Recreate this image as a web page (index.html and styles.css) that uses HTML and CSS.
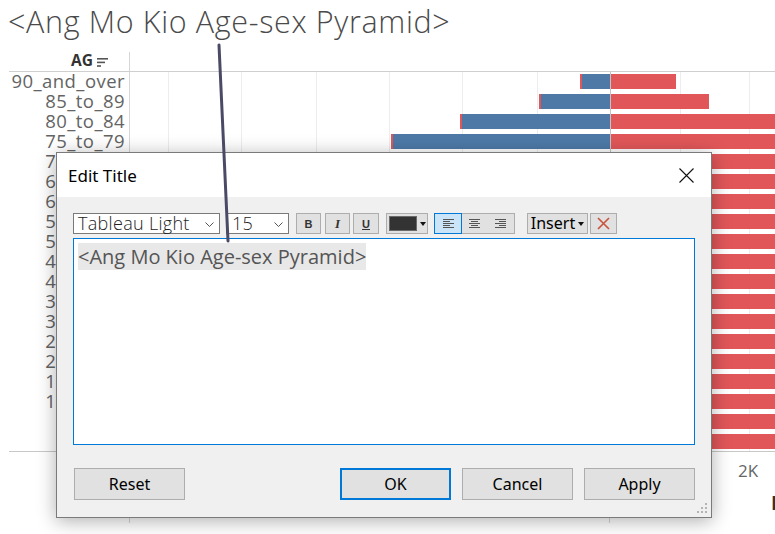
FILE: index.html
```html
<!DOCTYPE html>
<html>
<head>
<meta charset="utf-8">
<title>Edit Title</title>
<link rel="stylesheet" href="styles.css">
</head>
<body>
<div class="sheet">
  <div class="title">&lt;Ang Mo Kio Age-sex Pyramid&gt;</div>
  <div class="viz">
    <div class="rowhdr">
      <div class="rowhdr-inner">
        <span class="ag">AG</span>
        <svg class="sort" width="11" height="9" viewBox="0 0 11 9"><rect x="0" y="0" width="11" height="1.6" fill="#555"/><rect x="0" y="3.6" width="8" height="1.6" fill="#555"/><rect x="0" y="7.2" width="4" height="1.6" fill="#555"/></svg>
      </div>
    </div>
    <div class="panehdr"></div>

    <div class="labels">
      <div class="lbl">90_and_over</div>
      <div class="lbl">85_to_89</div>
      <div class="lbl">80_to_84</div>
      <div class="lbl">75_to_79</div>
      <div class="lbl">70_to_74</div>
      <div class="lbl">65_to_69</div>
      <div class="lbl">60_to_64</div>
      <div class="lbl">55_to_59</div>
      <div class="lbl">50_to_54</div>
      <div class="lbl">45_to_49</div>
      <div class="lbl">40_to_44</div>
      <div class="lbl">35_to_39</div>
      <div class="lbl">30_to_34</div>
      <div class="lbl">25_to_29</div>
      <div class="lbl">20_to_24</div>
      <div class="lbl">15_to_19</div>
      <div class="lbl">10_to_14</div>
      <div class="lbl">5_to_9</div>
      <div class="lbl">0_to_4</div>
    </div>

    <div class="pane">
      <div class="grid-line" style="left:38px"></div>
      <div class="grid-line" style="left:111px"></div>
      <div class="grid-line" style="left:186px"></div>
      <div class="grid-line" style="left:259px"></div>
      <div class="grid-line" style="left:332px"></div>
      <div class="grid-line" style="left:407px"></div>
      <div class="grid-line" style="left:550px"></div>
      <div class="grid-line" style="left:619px"></div>
      <div class="rows">
        <div class="row"><div class="lh"><div class="bar m" style="width:30px"></div></div><div class="rh"><div class="bar f" style="width:65px"></div></div></div>
        <div class="row"><div class="lh"><div class="bar m" style="width:71px"></div></div><div class="rh"><div class="bar f" style="width:98px"></div></div></div>
        <div class="row"><div class="lh"><div class="bar m" style="width:150px"></div></div><div class="rh"><div class="bar f" style="width:220px"></div></div></div>
        <div class="row"><div class="lh"><div class="bar m" style="width:219px"></div></div><div class="rh"><div class="bar f" style="width:240px"></div></div></div>
        <div class="row"><div class="lh"><div class="bar m" style="width:262px"></div></div><div class="rh"><div class="bar f" style="width:260px"></div></div></div>
        <div class="row"><div class="lh"><div class="bar m" style="width:300px"></div></div><div class="rh"><div class="bar f" style="width:280px"></div></div></div>
        <div class="row"><div class="lh"><div class="bar m" style="width:330px"></div></div><div class="rh"><div class="bar f" style="width:300px"></div></div></div>
        <div class="row"><div class="lh"><div class="bar m" style="width:350px"></div></div><div class="rh"><div class="bar f" style="width:300px"></div></div></div>
        <div class="row"><div class="lh"><div class="bar m" style="width:340px"></div></div><div class="rh"><div class="bar f" style="width:300px"></div></div></div>
        <div class="row"><div class="lh"><div class="bar m" style="width:330px"></div></div><div class="rh"><div class="bar f" style="width:300px"></div></div></div>
        <div class="row"><div class="lh"><div class="bar m" style="width:300px"></div></div><div class="rh"><div class="bar f" style="width:290px"></div></div></div>
        <div class="row"><div class="lh"><div class="bar m" style="width:290px"></div></div><div class="rh"><div class="bar f" style="width:280px"></div></div></div>
        <div class="row"><div class="lh"><div class="bar m" style="width:280px"></div></div><div class="rh"><div class="bar f" style="width:270px"></div></div></div>
        <div class="row"><div class="lh"><div class="bar m" style="width:250px"></div></div><div class="rh"><div class="bar f" style="width:260px"></div></div></div>
        <div class="row"><div class="lh"><div class="bar m" style="width:240px"></div></div><div class="rh"><div class="bar f" style="width:250px"></div></div></div>
        <div class="row"><div class="lh"><div class="bar m" style="width:230px"></div></div><div class="rh"><div class="bar f" style="width:240px"></div></div></div>
        <div class="row"><div class="lh"><div class="bar m" style="width:220px"></div></div><div class="rh"><div class="bar f" style="width:230px"></div></div></div>
        <div class="row"><div class="lh"><div class="bar m" style="width:200px"></div></div><div class="rh"><div class="bar f" style="width:220px"></div></div></div>
        <div class="row"><div class="lh"><div class="bar m" style="width:180px"></div></div><div class="rh"><div class="bar f" style="width:200px"></div></div></div>
      </div>
    </div>

    <div class="axis-left"></div>
    <div class="axis-pane">
      <div class="ax-l"></div>
      <div class="ax-r">
        <span class="tick" style="left:138px">2K</span>
        <span class="axis-title">Population</span>
      </div>
    </div>
  </div>
</div>

<div class="dialog">
  <div class="dlg-head">
    <span class="dlg-title">Edit Title</span>
    <svg class="close" width="15" height="15" viewBox="0 0 15 15"><path d="M0.5 0.5 L14.5 14.5 M14.5 0.5 L0.5 14.5" stroke="#111" stroke-width="1.1" fill="none"/></svg>
  </div>
  <div class="dlg-body">
    <div class="toolbar">
      <div class="select font-sel"><span class="sel-text">Tableau Light</span><svg class="chev" width="9" height="5" viewBox="0 0 9 5"><path d="M0.5 0.5 L4.5 4.5 L8.5 0.5" stroke="#555" stroke-width="1" fill="none"/></svg></div>
      <div class="select size-sel"><span class="sel-text">15</span><svg class="chev" width="9" height="5" viewBox="0 0 9 5"><path d="M0.5 0.5 L4.5 4.5 L8.5 0.5" stroke="#555" stroke-width="1" fill="none"/></svg></div>
      <div class="tb fmt bold">B</div>
      <div class="tb fmt ital">I</div>
      <div class="tb fmt under">U</div>
      <div class="tb color"><span class="swatch"></span><span class="caret"></span></div>
      <div class="align-group">
        <div class="seg sel"><svg width="11" height="9" viewBox="0 0 11 9"><g fill="#555"><rect x="0" y="0" width="11" height="1"/><rect x="0" y="2" width="7" height="1"/><rect x="0" y="4" width="11" height="1"/><rect x="0" y="6" width="7" height="1"/><rect x="0" y="8" width="11" height="1"/></g></svg></div>
        <div class="seg"><svg width="11" height="9" viewBox="0 0 11 9"><g fill="#555"><rect x="0" y="0" width="11" height="1"/><rect x="2" y="2" width="7" height="1"/><rect x="0" y="4" width="11" height="1"/><rect x="2" y="6" width="7" height="1"/><rect x="0" y="8" width="11" height="1"/></g></svg></div>
        <div class="seg"><svg width="11" height="9" viewBox="0 0 11 9"><g fill="#555"><rect x="0" y="0" width="11" height="1"/><rect x="4" y="2" width="7" height="1"/><rect x="0" y="4" width="11" height="1"/><rect x="4" y="6" width="7" height="1"/><rect x="0" y="8" width="11" height="1"/></g></svg></div>
      </div>
      <div class="tb insert"><span>Insert</span><span class="caret"></span></div>
      <div class="tb clear"><svg width="13" height="13" viewBox="0 0 13 13"><path d="M1 1 L12 12 M12 1 L1 12" stroke="#c9553f" stroke-width="1.7" fill="none"/></svg></div>
    </div>
    <div class="editor"><span class="hl">&lt;Ang Mo Kio Age-sex Pyramid&gt;</span></div>
    <div class="actions">
      <div class="btn reset">Reset</div>
      <div class="btn ok">OK</div>
      <div class="btn">Cancel</div>
      <div class="btn">Apply</div>
    </div>
  </div>
  <svg class="grip" width="11" height="11" viewBox="0 0 11 11"><g fill="#b4b4b4"><rect x="8" y="0" width="2" height="2"/><rect x="4" y="4" width="2" height="2"/><rect x="8" y="4" width="2" height="2"/><rect x="0" y="8" width="2" height="2"/><rect x="4" y="8" width="2" height="2"/><rect x="8" y="8" width="2" height="2"/></g></svg>
</div>

<svg class="annot" width="775" height="534" viewBox="0 0 775 534"><line x1="219" y1="45" x2="228" y2="241" stroke="#4a4a66" stroke-width="3" stroke-linecap="round"/></svg>
</body>
</html>
```

FILE: styles.css
```css
* { box-sizing: border-box; }
html, body { margin: 0; padding: 0; }
body {
  width: 775px;
  height: 534px;
  overflow: hidden;
  background: #fff;
  position: relative;
  font-family: "Open Sans", sans-serif;
}

.sheet { width: 775px; }

.title {
  height: 50px;
  padding: 1px 0 0 8px;
  font-size: 30.5px;
  font-weight: 300;
  letter-spacing: 0.65px;
  line-height: 41px;
  color: #4a4a4a;
  white-space: nowrap;
}

.viz {
  margin-left: 9px;
  display: grid;
  grid-template-columns: 121px 645px;
  grid-template-rows: 22px 380px 71px;
}

.rowhdr {
  border-bottom: 1px solid #cfcfcf;
  padding-top: 2px;
}
.rowhdr-inner {
  height: 19px;
  border-right: 1px solid #d6d6d6;
  display: flex;
  justify-content: flex-end;
  align-items: center;
  gap: 4px;
  padding: 0 21px 2px 0;
}
.ag {
  font-weight: 700;
  font-size: 15.5px;
  line-height: 17px;
  color: #333;
}
.sort { margin-top: 3px; }
.panehdr { border-bottom: 1px solid #cfcfcf; }

.labels {
  border-right: 1px solid #d6d6d6;
  border-bottom: 1px solid #c8c8c8;
  overflow: hidden;
}
.lbl {
  height: 20px;
  line-height: 20px;
  text-align: right;
  padding-right: 4px;
  font-size: 18.5px;
  letter-spacing: 0.45px;
  color: #646464;
  white-space: nowrap;
  position: relative;
  top: -1px;
}

.pane {
  position: relative;
  border-bottom: 1px solid #c8c8c8;
  overflow: hidden;
}
.grid-line {
  position: absolute;
  top: 0;
  bottom: 0;
  width: 1px;
  background: #ededed;
}
.rows { position: relative; }
.row { display: flex; height: 20px; }
.lh {
  width: 480px;
  flex: none;
  display: flex;
  justify-content: flex-end;
}
.rh {
  flex: 1;
  border-left: 1px solid #c4c4c4;
}
.bar { height: 15px; margin-top: 2px; }
.bar.m { background: #4e79a7; border-left: 2px solid #e15759; }
.bar.f { background: #e15759; }

.axis-left { border-right: 1px solid #d6d6d6; }
.axis-pane { display: flex; }
.ax-l { width: 480px; flex: none; border-right: 1px solid #d6d6d6; }
.ax-r { flex: 1; position: relative; }
.tick {
  position: absolute;
  top: 7px;
  transform: translateX(-50%);
  font-size: 17px;
  color: #666;
  line-height: 23px;
}
.axis-title {
  position: absolute;
  left: 161px;
  top: 38px;
  font-size: 19px;
  font-weight: 700;
  color: #333;
  white-space: nowrap;
}

/* Dialog */
.dialog {
  position: absolute;
  left: 56px;
  top: 152px;
  width: 656px;
  height: 366px;
  border: 1px solid #7a7a7a;
  background: #f0f0f0;
  box-shadow: 0 3px 18px rgba(0, 0, 0, 0.32);
  font-family: "Noto Sans", sans-serif;
  display: flex;
  flex-direction: column;
}
.dlg-head {
  height: 44px;
  flex: none;
  background: #fff;
  display: flex;
  align-items: center;
  justify-content: space-between;
  padding: 0 17px 0 11px;
}
.dlg-title { font-size: 17px; color: #000; }

.dlg-body {
  flex: 1;
  padding: 16px 16px 0 16px;
  display: flex;
  flex-direction: column;
}
.toolbar {
  display: flex;
  height: 21px;
  flex: none;
}
.select {
  height: 21px;
  border: 1px solid #7a7a7a;
  background: #fff;
  display: flex;
  align-items: center;
  justify-content: space-between;
  padding: 0 5px 0 4px;
}
.sel-text {
  font-family: "Open Sans", sans-serif;
  font-size: 18px;
  font-weight: 300;
  letter-spacing: 0.3px;
  line-height: 19px;
  color: #222;
  white-space: nowrap;
}
.font-sel { width: 147px; }
.size-sel { width: 63px; margin-left: 6px; }
.size-sel .sel-text { padding-left: 1px; }
.chev { margin-top: 1px; }

.tb {
  height: 21px;
  border: 1px solid #adadad;
  background: #e1e1e1;
  display: flex;
  align-items: center;
  justify-content: center;
  color: #333;
}
.fmt { width: 25px; }
.bold {
  margin-left: 7px;
  font-family: "Liberation Sans", sans-serif;
  font-weight: 700;
  font-size: 11px;
}
.ital {
  margin-left: 4px;
  font-family: "Liberation Serif", serif;
  font-weight: 700;
  font-style: italic;
  font-size: 13px;
}
.under {
  margin-left: 3px;
  width: 26px;
  font-family: "Liberation Sans", sans-serif;
  font-weight: 700;
  font-size: 11px;
  text-decoration: underline;
}
.color {
  width: 42px;
  margin-left: 7px;
  justify-content: flex-start;
  padding-left: 2px;
  gap: 3px;
}
.swatch {
  width: 28px;
  height: 15px;
  background: #333;
  border: 1px solid #6a6a6a;
}
.caret {
  width: 0;
  height: 0;
  border-left: 3px solid transparent;
  border-right: 3px solid transparent;
  border-top: 4px solid #111;
}
.align-group {
  width: 81px;
  height: 21px;
  margin-left: 6px;
  border: 1px solid #adadad;
  background: #e1e1e1;
  display: flex;
}
.seg {
  flex: 1;
  display: flex;
  align-items: center;
  justify-content: center;
}
.seg.sel {
  background: #cce4f7;
  outline: 1px solid #0078d7;
}
.insert {
  width: 61px;
  margin-left: 12px;
  gap: 3px;
  font-size: 16px;
  line-height: 19px;
  color: #000;
}
.clear { width: 27px; margin-left: 2px; }

.editor {
  margin-top: 4px;
  height: 207px;
  flex: none;
  border: 1px solid #0078d7;
  background: #fff;
  padding: 4px;
  font-family: "Open Sans", sans-serif;
  font-size: 20px;
  color: #555;
  white-space: nowrap;
}
.hl { background: #e8e8e8; }

.actions {
  margin-top: 23px;
  display: flex;
  gap: 11px;
  height: 32px;
  flex: none;
}
.btn {
  width: 111px;
  height: 32px;
  border: 1px solid #adadad;
  background: #e1e1e1;
  display: flex;
  align-items: center;
  justify-content: center;
  font-size: 16px;
  color: #000;
}
.btn.reset { margin-left: 1px; }
.btn.ok { margin-left: auto; border: 2px solid #0078d7; }

.grip {
  position: absolute;
  right: 3px;
  bottom: 3px;
}

.annot {
  position: absolute;
  left: 0;
  top: 0;
  pointer-events: none;
}
```
